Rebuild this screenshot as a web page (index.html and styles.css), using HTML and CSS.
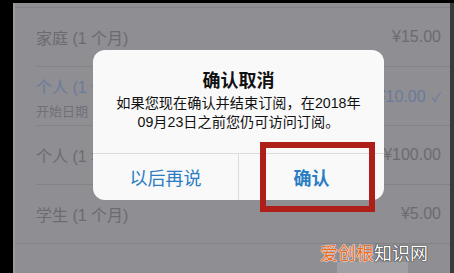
FILE: index.html
```html
<!DOCTYPE html>
<html lang="zh-CN">

<head>
    <meta charset="UTF-8" />
    <title>确认取消</title>
    <link rel="stylesheet" href="styles.css">
</head>

<body>
    <div class="screen">
        <div class="list">
            <div class="row">
                <span class="plan">家庭 (1 个月)</span>
                <span class="price">¥15.00</span>
            </div>
            <div class="row">
                <div>
                    <div class="plan current">个人 (1 个月)</div>
                    <div class="sub">开始日期</div>
                </div>
                <span class="price current">¥10.00 <span class="check">✓</span></span>
            </div>
            <div class="row">
                <span class="plan">个人 (1 年)</span>
                <span class="price">¥100.00</span>
            </div>
            <div class="row last">
                <span class="plan">学生 (1 个月)</span>
                <span class="price">¥5.00</span>
            </div>
        </div>
        <div class="home-bar"></div>
    </div>

    <div class="alert">
        <div class="alert-body">
            <div class="alert-title">确认取消</div>
            <div class="alert-text">如果您现在确认并结束订阅，在2018年<br>09月23日之前您仍可访问订阅。</div>
        </div>
        <div class="alert-buttons">
            <button type="button">以后再说</button>
            <button type="button" class="primary">确认</button>
        </div>
    </div>

    <div class="highlight"></div>

    <div class="watermark"><span class="wm-orange">爱创根</span><span class="wm-white">知识网</span></div>
</body>

</html>
```

FILE: styles.css
```css
body {
    margin: 0;
    background: #000;
    font-family: "Liberation Sans", "Noto Sans CJK SC", sans-serif;
    width: 454px;
    height: 273px;
    overflow: hidden;
    position: relative;
}

.screen {
    margin: 3px 0 0 13px;
    height: 270px;
    background: #8f8e93;
    border-left: 2px solid #9b9a9f;
    border-right: 4px solid #3a393c;
    padding-top: 4px;
    box-sizing: border-box;
    position: relative;
}

.list {
    border-top: 1px solid #838287;
}

.row {
    height: 58px;
    margin-left: 21px;
    padding-right: 9px;
    border-bottom: 1px solid #838287;
    display: flex;
    justify-content: space-between;
    align-items: center;
}

.row.last {
    margin-left: 0;
    padding-left: 21px;
}

.plan {
    font-size: 16px;
    color: #6c6b70;
}

.plan.current {
    color: #6a7b9c;
    margin-top: 2px;
}

.sub {
    font-size: 13px;
    color: #717075;
    margin-top: 3px;
}

.price {
    font-size: 16px;
    color: #6c6b70;
}

.price.current {
    color: #6a7b9c;
}

.check {
    font-size: 13px;
    margin-left: 2px;
}

.home-bar {
    position: absolute;
    left: 322px;
    bottom: 0;
    width: 71px;
    height: 11px;
    background: #a09fa4;
}

.alert {
    position: absolute;
    left: 93px;
    top: 50px;
    width: 291px;
    height: 150px;
    background: #f9f9fa;
    border-radius: 12px;
    display: flex;
    flex-direction: column;
    overflow: hidden;
}

.alert-body {
    height: 103px;
    padding-top: 20px;
    box-sizing: border-box;
    text-align: center;
    color: #111;
}

.alert-title {
    font-size: 18px;
    line-height: 22px;
    font-weight: bold;
}

.alert-text {
    font-size: 14.2px;
    line-height: 19px;
    margin-top: 2px;
}

.alert-buttons {
    flex: 1;
    display: flex;
    border-top: 1px solid #dcdcdf;
}

.alert-buttons button {
    flex: 1;
    background: none;
    border: none;
    font-family: inherit;
    font-size: 18px;
    color: #2b7dc3;
    padding: 0;
}

.alert-buttons button + button {
    border-left: 1px solid #dcdcdf;
}

.alert-buttons .primary {
    font-weight: bold;
}

.highlight {
    position: absolute;
    left: 260px;
    top: 142px;
    width: 115px;
    height: 70px;
    border: 6px solid #ad1f18;
    box-sizing: border-box;
}

.watermark {
    position: absolute;
    left: 320px;
    top: 242px;
    font-size: 18px;
    line-height: 20px;
    font-family: "Noto Sans CJK SC", sans-serif;
}

.wm-orange {
    color: #ec6b1f;
    text-shadow: 0 0 1px #fff, 0 0 1px #fff, 0 0 1px #fff;
}

.wm-white {
    color: #fff;
    text-shadow: 0 0 1px #333, 0 0 1px #333, 0 0 1px #333;
}
```
